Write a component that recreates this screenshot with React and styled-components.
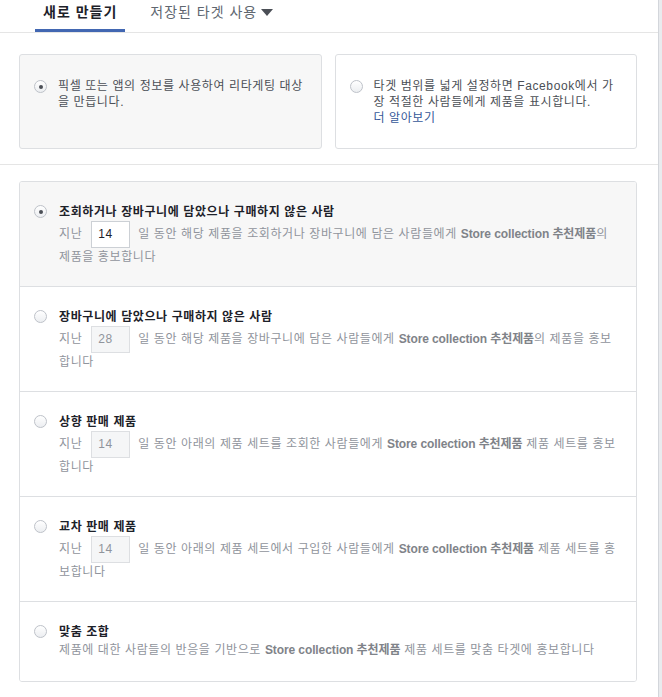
import React from 'react'
import styled, { createGlobalStyle } from 'styled-components'

const GlobalStyle = createGlobalStyle`
  html, body {
    margin: 0;
    padding: 0;
    background: #e9ebee;
  }
  body {
    font-family: "Liberation Sans", "Noto Sans CJK KR", sans-serif;
    font-size: 12px;
    letter-spacing: 0.6px;
    color: #1d2129;
  }
`

const rows = [
  {
    title: '조회하거나 장바구니에 담았으나 구매하지 않은 사람',
    days: '14',
    before: '일 동안 해당 제품을 조회하거나 장바구니에 담은 사람들에게 ',
    after: '의 제품을 홍보합니다',
    selected: true,
  },
  {
    title: '장바구니에 담았으나 구매하지 않은 사람',
    days: '28',
    before: '일 동안 해당 제품을 장바구니에 담은 사람들에게 ',
    after: '의 제품을 홍보합니다',
  },
  {
    title: '상향 판매 제품',
    days: '14',
    before: '일 동안 아래의 제품 세트를 조회한 사람들에게 ',
    after: ' 제품 세트를 홍보합니다',
  },
  {
    title: '교차 판매 제품',
    days: '14',
    before: '일 동안 아래의 제품 세트에서 구입한 사람들에게 ',
    after: ' 제품 세트를 홍보합니다',
  },
  {
    title: '맞춤 조합',
    before: '제품에 대한 사람들의 반응을 기반으로 ',
    after: ' 제품 세트를 맞춤 타겟에 홍보합니다',
  },
]

function App() {
  return (
    <Page>
      <GlobalStyle />
      <TabBar>
        <Tab active>새로 만들기</Tab>
        <Tab>
          저장된 타겟 사용 <Caret />
        </Tab>
      </TabBar>

      <Section>
        <Cards>
          <Card selected>
            <Radio checked />
            <CardText>픽셀 또는 앱의 정보를 사용하여 리타게팅 대상을 만듭니다.</CardText>
          </Card>
          <Card>
            <Radio />
            <CardText>
              타겟 범위를 넓게 설정하면 Facebook에서 가장 적절한 사람들에게 제품을 표시합니다.
              <br />
              <Link>더 알아보기</Link>
            </CardText>
          </Card>
        </Cards>
      </Section>

      <ListSection>
        <List>
          {rows.map((r) => (
            <Row key={r.title} selected={r.selected}>
              <Radio checked={r.selected} />
              <RowBody>
                <Title>{r.title}</Title>
                <Desc>
                  {r.days && (
                    <>
                      지난
                      <DayBox disabled={!r.selected}>{r.days}</DayBox>
                    </>
                  )}
                  {r.before}
                  <Strong>Store collection 추천제품</Strong>
                  {r.after}
                </Desc>
              </RowBody>
            </Row>
          ))}
        </List>
      </ListSection>
    </Page>
  )
}

export default App

const Page = styled.div`
  width: 658px;
  min-height: 697px;
  background: #fff;
  border-right: 1px solid #d3d6db;
`

const TabBar = styled.div`
  display: flex;
  height: 32px;
  padding-left: 35px;
  gap: 17px;
  border-bottom: 1px solid #e5e5e5;
`

const Tab = styled.div`
  display: flex;
  align-items: flex-start;
  gap: 4px;
  box-sizing: border-box;
  height: 32px;
  padding: 2px 8px 0;
  line-height: 20px;
  font-size: 14px;
  letter-spacing: 1px;
  font-weight: ${(p) => (p.active ? 'bold' : 'normal')};
  color: ${(p) => (p.active ? '#1d2129' : '#606770')};
  border-bottom: 3px solid ${(p) => (p.active ? '#4267b2' : 'transparent')};
`

const Caret = styled.span`
  width: 0;
  height: 0;
  margin-top: 7px;
  border-left: 6px solid transparent;
  border-right: 6px solid transparent;
  border-top: 7px solid #4b4f56;
`

const Section = styled.div`
  padding: 21px 21px 15px 19px;
  border-bottom: 1px solid #e5e5e5;
`

const Cards = styled.div`
  display: grid;
  grid-template-columns: 1fr 1fr;
  gap: 13px;
`

const Card = styled.div`
  display: flex;
  align-items: flex-start;
  gap: 11px;
  box-sizing: border-box;
  min-height: 93px;
  padding: 23px 16px 22px 14px;
  border: 1px solid #dddfe2;
  border-radius: 3px;
  background: ${(p) => (p.selected ? '#f7f7f7' : '#fff')};
`

const Radio = styled.span`
  flex: none;
  position: relative;
  box-sizing: border-box;
  width: 13px;
  height: 13px;
  margin-top: 2px;
  border: 1px solid #bec2c9;
  border-radius: 50%;
  background: linear-gradient(#fff, #eceef1);

  &::after {
    content: '';
    display: ${(p) => (p.checked ? 'block' : 'none')};
    position: absolute;
    left: 3.5px;
    top: 3.5px;
    width: 4px;
    height: 4px;
    border-radius: 50%;
    background: #4b4f56;
  }
`

const CardText = styled.div`
  line-height: 16px;
  color: #4b4f56;
`

const Link = styled.span`
  color: #365899;
`

const ListSection = styled.div`
  padding: 16px 21px 15px 19px;
`

const List = styled.div`
  border: 1px solid #dddfe2;
  border-radius: 3px;
  overflow: hidden;
`

const Row = styled.div`
  display: flex;
  align-items: flex-start;
  gap: 12px;
  padding: 21px 18px 20px 14px;
  background: ${(p) => (p.selected ? '#f7f7f7' : '#fff')};

  & + & {
    border-top: 1px solid #dddfe2;
  }

  &:last-child {
    padding-bottom: 22px;
  }
`

const RowBody = styled.div`
  flex: 1;
`

const Title = styled.div`
  font-weight: bold;
  line-height: 18px;
  color: #1d2129;
`

const Desc = styled.div`
  line-height: 18px;
  color: #90949c;
`

const Strong = styled.b`
  letter-spacing: -0.1px;
  color: #7f8389;
`

const DayBox = styled.span`
  display: inline-block;
  box-sizing: border-box;
  width: 39px;
  height: 27px;
  margin: 0 8px 0 9px;
  padding-left: 6px;
  line-height: 25px;
  vertical-align: middle;
  border: 1px solid ${(p) => (p.disabled ? '#dddfe2' : '#ccd0d5')};
  background: ${(p) => (p.disabled ? '#f5f6f7' : '#fff')};
  color: ${(p) => (p.disabled ? '#90949c' : '#1d2129')};
`
